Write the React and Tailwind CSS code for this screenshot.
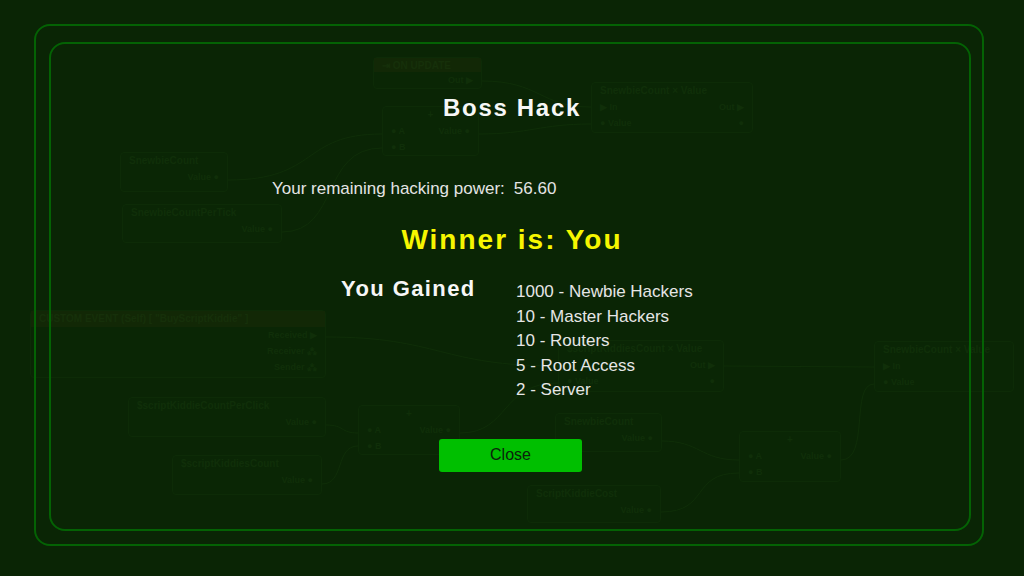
import React from 'react';

const GAINS = [
  '1000 - Newbie Hackers',
  '10 - Master Hackers',
  '10 - Routers',
  '5 - Root Access',
  '2 - Server',
];

// faint node graph sitting behind the dialog
const NODES = [
  { x: 373, y: 57, w: 109, h: 32, title: '⇥ ON UPDATE', event: true, rows: [['', 'Out ▶']] },
  { x: 382, y: 106, w: 97, h: 50, title: '+', center: true, rows: [['● A', 'Value ●'], ['● B', '']] },
  { x: 591, y: 82, w: 162, h: 51, title: 'SnewbieCount × Value', rows: [['▶ In', 'Out ▶'], ['● Value', '●']] },
  { x: 120, y: 152, w: 108, h: 40, title: 'SnewbieCount', rows: [['', 'Value ●']] },
  { x: 122, y: 204, w: 160, h: 39, title: 'SnewbieCountPerTick', rows: [['', 'Value ●']] },
  { x: 30, y: 310, w: 296, h: 68, title: 'CUSTOM EVENT (Self) [ "BuyScriptKiddie" ]', event: true, rows: [['', 'Received ▶'], ['', 'Receiver ⁂'], ['', 'Sender ⁂']] },
  { x: 128, y: 397, w: 198, h: 40, title: '$scriptKiddieCountPerClick', rows: [['', 'Value ●']] },
  { x: 172, y: 455, w: 150, h: 40, title: '$scriptKiddiesCount', rows: [['', 'Value ●']] },
  { x: 358, y: 405, w: 102, h: 50, title: '+', center: true, rows: [['● A', 'Value ●'], ['● B', '']] },
  { x: 558, y: 340, w: 166, h: 52, title: '$scriptKiddiesCount × Value', rows: [['', 'Out ▶'], ['● Value', '●']] },
  { x: 555, y: 413, w: 107, h: 39, title: 'SnewbieCount', rows: [['', 'Value ●']] },
  { x: 739, y: 431, w: 102, h: 51, title: '+', center: true, rows: [['● A', 'Value ●'], ['● B', '']] },
  { x: 527, y: 485, w: 134, h: 38, title: 'ScriptKiddieCost', rows: [['', 'Value ●']] },
  { x: 874, y: 341, w: 140, h: 51, title: 'SnewbieCount × Value', rows: [['▶ In', ''], ['● Value', '']] },
];

const WIRES = [
  'M482 81 C 540 81, 540 107, 591 107',
  'M479 134 C 530 134, 540 124, 591 124',
  'M228 180 C 320 180, 300 134, 382 134',
  'M282 232 C 340 232, 320 148, 382 148',
  'M326 337 C 440 337, 440 366, 558 366',
  'M326 425 C 345 425, 340 433, 358 433',
  'M322 484 C 345 484, 335 446, 358 446',
  'M460 433 C 510 433, 500 383, 558 383',
  'M724 366 L 874 367',
  'M662 441 C 700 441, 700 460, 739 460',
  'M661 512 C 710 512, 690 473, 739 473',
  'M841 460 C 870 460, 850 384, 874 384',
];

function GraphNode({ node }) {
  return (
    <div
      className="absolute flex flex-col rounded-sm border border-[#0d2b07] bg-[#0a2605] px-2 font-['Liberation_Sans',sans-serif] text-[10px] font-bold leading-[16px] text-[#102f09]"
      style={{ left: node.x, top: node.y, width: node.w, height: node.h }}
    >
      <div
        className={`-mx-2 truncate px-2 ${node.event ? 'bg-[#122806] text-[#16300a]' : ''} ${node.center ? 'text-center' : ''}`}
      >
        {node.title}
      </div>
      {node.rows.map((r, i) => (
        <div key={i} className="flex justify-between text-[9px] leading-[16px]">
          <span>{r[0]}</span>
          <span>{r[1]}</span>
        </div>
      ))}
    </div>
  );
}

function NodeGraph() {
  return (
    <div className="pointer-events-none absolute inset-0 overflow-hidden">
      <svg className="absolute inset-0" width="1024" height="576">
        {WIRES.map((d, i) => (
          <path key={i} d={d} fill="none" stroke="#0f2e08" strokeWidth="1" />
        ))}
      </svg>
      {NODES.map((n, i) => (
        <GraphNode key={i} node={n} />
      ))}
    </div>
  );
}

export default function App() {
  return (
    <div className="relative h-[576px] w-[1024px] overflow-hidden bg-[#0a2505] pt-[24px] pl-[34px] pr-[40px] pb-[30px] font-['Liberation_Sans',sans-serif]">
      <NodeGraph />
      <div className="relative h-full rounded-[16px] border-2 border-[#046204] pt-[16px] pl-[13px] pr-[11px] pb-[13px]">
        <div className="h-full rounded-[16px] border-2 border-[#046204]">
          <div className="ml-[221px] w-[480px]">
            <h1 className="mt-[50px] text-center text-[24px] font-bold leading-[28px] tracking-[1.7px] text-[#f7f7f7]">
              Boss Hack
            </h1>

            <div className="mt-[57px] flex gap-[9px] text-[17px] leading-[20px] text-[#e4e4e4]">
              <span>Your remaining hacking power:</span>
              <span>56.60</span>
            </div>

            <div className="mt-[25px] text-center text-[28px] font-bold leading-[32px] tracking-[2px] text-[#f6f600]">
              Winner is: You
            </div>

            <div className="mt-[20px] flex items-start">
              <div className="w-[244px] pl-[69px] text-[22px] font-bold leading-[26px] tracking-[1.4px] text-[#f7f7f7]">
                You Gained
              </div>
              <ul className="pt-[4px] text-[17px] leading-[24.5px] text-[#e6e6e6]">
                {GAINS.map((g) => (
                  <li key={g}>{g}</li>
                ))}
              </ul>
            </div>

            <div className="mt-[36px] flex justify-center pr-[3px]">
              <button className="h-[33px] w-[143px] rounded-[3px] bg-[#00bf00] text-[16px] text-[#0b220b]">
                Close
              </button>
            </div>
          </div>
        </div>
      </div>
    </div>
  );
}
